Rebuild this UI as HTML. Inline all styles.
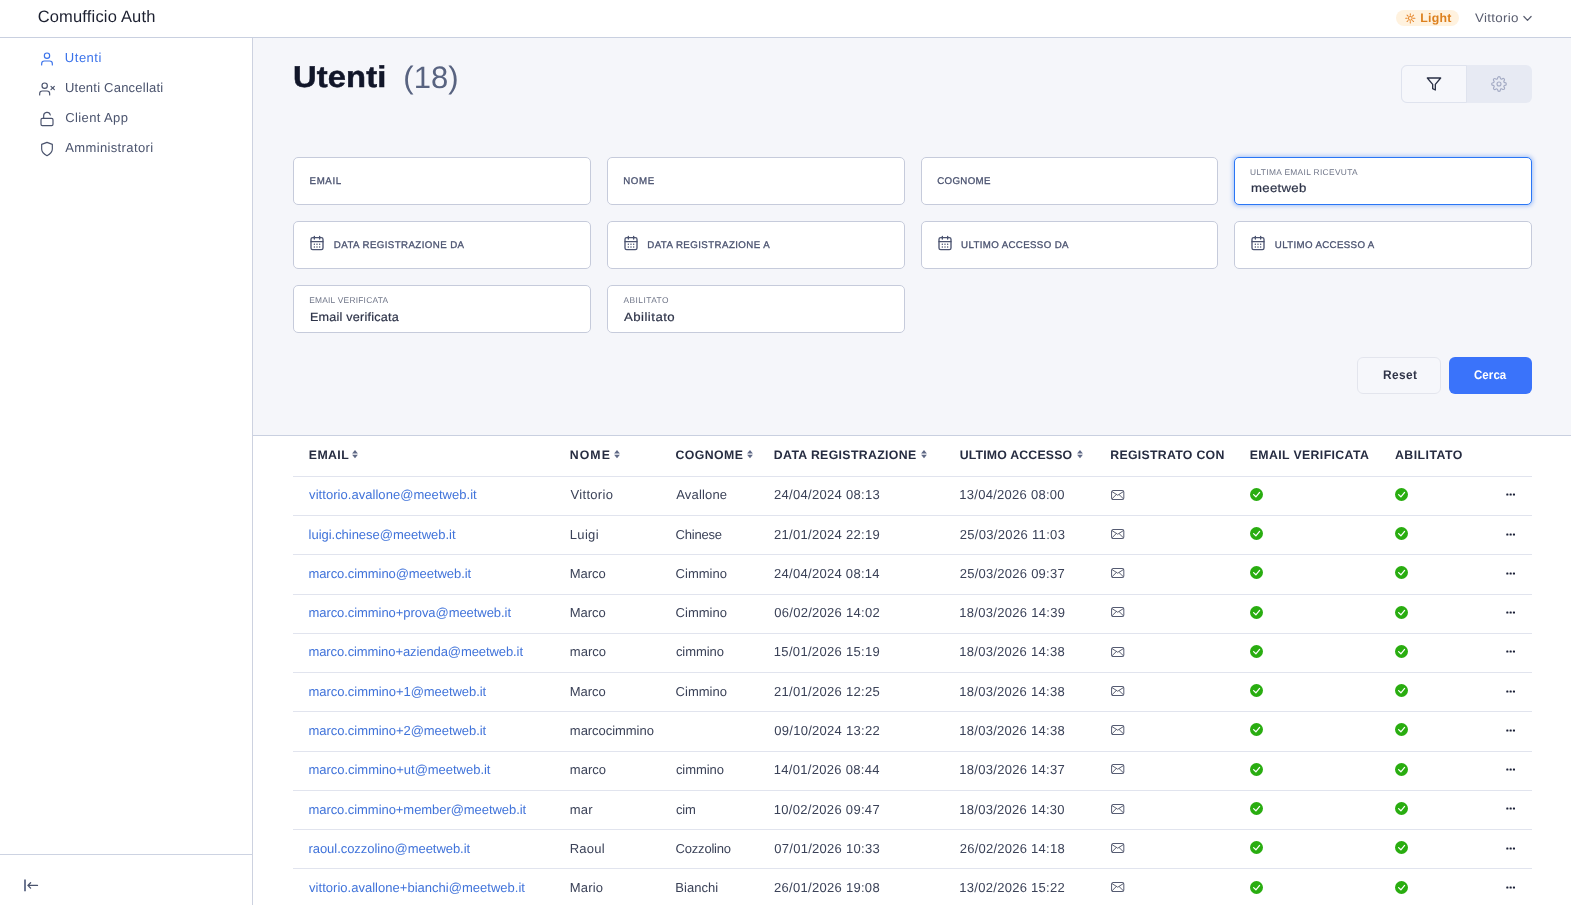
<!DOCTYPE html>
<html lang="it">
<head>
<meta charset="utf-8">
<title>Comufficio Auth</title>
<style>
*{box-sizing:border-box;margin:0;padding:0}
html,body{width:1571px;height:905px;overflow:hidden;background:#f5f6fa;font-family:"Liberation Sans",sans-serif}
#w{position:absolute;left:0;top:0;width:1571px;height:905px;will-change:transform}
.r,.t,.f{position:absolute;display:block}
.t{white-space:nowrap;text-rendering:geometricPrecision}
svg{overflow:visible}
.ic{fill:none;stroke:currentColor;stroke-width:2;stroke-linecap:round;stroke-linejoin:round}
.f{height:48px;background:#fff;border:1px solid #c6cbdb;border-radius:5px}
.foc{border-color:#2a76f5;box-shadow:0 0 4px 0.5px rgba(45,116,243,.4)}

.h{position:absolute;left:293px;width:1239px;height:1px;background:#e1e4ee}
</style>
</head>
<body>
<div id="w">
<div class="r" style="left:0;top:0;width:1571px;height:37px;background:#fff"></div>
<div class="r" style="left:0;top:37px;width:1571px;height:1px;background:#c9d0e0"></div>
<span id="brand" class="t" style="left:37.65px;top:6.2px;font-size:16.5px;line-height:23px;color:#1c2030;letter-spacing:0.177px;">Comufficio Auth</span>
<div class="r" style="left:1396px;top:10px;width:63px;height:16px;border-radius:8px;background:#fff2df"></div>
<svg class="r" style="left:1404.6px;top:12.6px;width:10.6px;height:10.6px;color:#e6862b" viewBox="0 0 24 24" fill="none" stroke="currentColor" stroke-width="2.3" stroke-linecap="round"><circle cx="12" cy="12" r="4.2"/><path d="M12 1.5v3.4M12 19.1v3.4M1.5 12h3.4M19.1 12h3.4M4.6 4.6l2.4 2.4M17 17l2.4 2.4M4.6 19.4L7 17M17 7l2.4-2.4"/></svg>
<span id="light" class="t" style="left:1420.36px;top:10.4px;font-size:12.3px;line-height:17px;font-weight:700;color:#dd801e;letter-spacing:0.222px;">Light</span>
<span id="user" class="t" style="left:1474.69px;top:8.9px;font-size:12.5px;line-height:18px;color:#585c6e;letter-spacing:0.265px;transform:scale(1.07,1);transform-origin:0 13.0px;">Vittorio</span>
<svg class="r" style="left:1523px;top:15.3px;width:9px;height:7px;color:#585c6e" viewBox="0 0 9 7" fill="none" stroke="currentColor" stroke-width="1.2" stroke-linecap="round" stroke-linejoin="round"><path d="M0.9 1.5L4.5 5.4 8.1 1.5"/></svg>
<div class="r" style="left:0;top:38px;width:252px;height:867px;background:#fff"></div>
<div class="r" style="left:252px;top:38px;width:1px;height:867px;background:#cdd2e0"></div>
<div class="r" style="left:0;top:854px;width:252px;height:1px;background:#cdd3e2"></div>
<svg class="r ic" style="left:39px;top:51px;width:16px;height:16px;color:#3a72ea;stroke-width:1.75" viewBox="0 0 24 24"><path d="M20 21v-2a4 4 0 0 0-4-4H8a4 4 0 0 0-4 4v2"/><circle cx="12" cy="7" r="4"/></svg>
<span id="nav0" class="t" style="left:64.87px;top:48.5px;font-size:13px;line-height:18px;color:#3a72ea;letter-spacing:0.509px;">Utenti</span>
<svg class="r ic" style="left:39px;top:81px;width:16px;height:16px;color:#4a536d;stroke-width:1.75" viewBox="0 0 24 24"><path d="M16 21v-2a4 4 0 0 0-4-4H5a4 4 0 0 0-4 4v2"/><circle cx="8.5" cy="7" r="4"/><line x1="18" y1="8" x2="23" y2="13"/><line x1="23" y1="8" x2="18" y2="13"/></svg>
<span id="nav1" class="t" style="left:64.96px;top:78.5px;font-size:13px;line-height:18px;color:#4a536d;letter-spacing:0.223px;">Utenti Cancellati</span>
<svg class="r ic" style="left:39px;top:111px;width:16px;height:16px;color:#4a536d;stroke-width:1.75" viewBox="0 0 24 24"><rect x="3" y="11" width="18" height="11" rx="2" ry="2"/><path d="M7 11V7a5 5 0 0 1 9.9-1"/></svg>
<span id="nav2" class="t" style="left:65.35px;top:108.5px;font-size:13px;line-height:18px;color:#4a536d;letter-spacing:0.364px;">Client App</span>
<svg class="r ic" style="left:39px;top:141px;width:16px;height:16px;color:#4a536d;stroke-width:1.75" viewBox="0 0 24 24"><path d="M12 22s8-4 8-10V5l-8-3-8 3v7c0 6 8 10 8 10z"/></svg>
<span id="nav3" class="t" style="left:65.21px;top:138.5px;font-size:13px;line-height:18px;color:#4a536d;letter-spacing:0.369px;">Amministratori</span>
<svg class="r" style="left:22px;top:877px;width:18px;height:18px;color:#4a536d" viewBox="0 0 18 18"><path d="M3 2.6v11.6" fill="none" stroke="#67718d" stroke-width="1.9"/><path d="M15.5 8.4H6M8.6 5.7L5.9 8.4l2.7 2.7" fill="none" stroke="currentColor" stroke-width="1.3" stroke-linecap="round" stroke-linejoin="round"/></svg>
<span id="title" class="t" style="left:292.79px;top:57.1px;font-size:30px;line-height:42px;font-weight:700;color:#111629;letter-spacing:0.126px;-webkit-text-stroke:0.5px #111629;transform:scale(1.09,1);transform-origin:0 30.5px;">Utenti</span>
<span id="count" class="t" style="left:403.26px;top:55.7px;font-size:31px;line-height:43px;color:#586380;letter-spacing:0.078px;">(18)</span>
<div class="r" style="left:1401px;top:65px;width:131px;height:38px;border-radius:6px;background:#e7eaf3"></div>
<div class="r" style="left:1401px;top:65px;width:66px;height:38px;border-radius:6px 0 0 6px;background:#f6f7fb;border:1px solid #dfe3ee"></div>
<svg class="r ic" style="left:1426px;top:75.6px;width:16px;height:16px;color:#2a3045" viewBox="0 0 24 24"><polygon points="22 3 2 3 10 12.46 10 19 14 21 14 12.46 22 3"/></svg>
<svg class="r ic" style="left:1491px;top:76px;width:16px;height:16px;color:#a4abc4;stroke-width:1.7" viewBox="0 0 24 24"><circle cx="12" cy="12" r="3"/><path d="M19.4 15a1.65 1.65 0 0 0 .33 1.82l.06.06a2 2 0 0 1 0 2.83 2 2 0 0 1-2.83 0l-.06-.06a1.65 1.65 0 0 0-1.82-.33 1.65 1.65 0 0 0-1 1.51V21a2 2 0 0 1-2 2 2 2 0 0 1-2-2v-.09A1.65 1.65 0 0 0 9 19.4a1.65 1.65 0 0 0-1.82.33l-.06.06a2 2 0 0 1-2.83 0 2 2 0 0 1 0-2.83l.06-.06a1.65 1.65 0 0 0 .33-1.82 1.65 1.65 0 0 0-1.51-1H3a2 2 0 0 1-2-2 2 2 0 0 1 2-2h.09A1.65 1.65 0 0 0 4.6 9a1.65 1.65 0 0 0-.33-1.82l-.06-.06a2 2 0 0 1 0-2.83 2 2 0 0 1 2.83 0l.06.06a1.65 1.65 0 0 0 1.82.33H9a1.65 1.65 0 0 0 1-1.51V3a2 2 0 0 1 2-2 2 2 0 0 1 2 2v.09a1.65 1.65 0 0 0 1 1.51 1.65 1.65 0 0 0 1.82-.33l.06-.06a2 2 0 0 1 2.83 0 2 2 0 0 1 0 2.83l-.06.06a1.65 1.65 0 0 0-.33 1.82V9a1.65 1.65 0 0 0 1.51 1H21a2 2 0 0 1 2 2 2 2 0 0 1-2 2h-.09a1.65 1.65 0 0 0-1.51 1z"/></svg>
<div class="f" style="left:293px;top:157px;width:298px"></div>
<span id="l_email" class="t" style="left:309.61px;top:175.3px;font-size:9.7px;line-height:14px;color:#4b5370;letter-spacing:0.600px;-webkit-text-stroke:0.3px #4b5370;">EMAIL</span>
<div class="f" style="left:607px;top:157px;width:298px"></div>
<span id="l_nome" class="t" style="left:623.15px;top:175.3px;font-size:9.7px;line-height:14px;color:#4b5370;letter-spacing:0.688px;-webkit-text-stroke:0.3px #4b5370;">NOME</span>
<div class="f" style="left:921px;top:157px;width:297px"></div>
<span id="l_cogn" class="t" style="left:937.28px;top:175.3px;font-size:9.7px;line-height:14px;color:#4b5370;letter-spacing:0.345px;-webkit-text-stroke:0.3px #4b5370;">COGNOME</span>
<div class="f foc" style="left:1234px;top:157px;width:298px"></div>
<span id="s_ult" class="t" style="left:1250.09px;top:165.9px;font-size:8.4px;line-height:12px;color:#6f7588;letter-spacing:0.335px;">ULTIMA EMAIL RICEVUTA</span>
<span id="v_meet" class="t" style="left:1250.62px;top:180.4px;font-size:12px;line-height:17px;color:#2e3449;letter-spacing:0.262px;-webkit-text-stroke:0.2px #2e3449;transform:scale(1.1,1);transform-origin:0 11.5px;">meetweb</span>
<div class="f" style="left:293px;top:221px;width:298px"></div>
<svg class="r ic" style="left:309px;top:235.3px;width:16px;height:16px;color:#4b5370" viewBox="0 0 24 24"><rect x="3" y="4" width="18" height="18" rx="2.5"/><path d="M16 2v4M8 2v4M3 10h18"/><path d="M8 14h.01M12 14h.01M16 14h.01M8 18h.01M12 18h.01M16 18h.01" stroke-width="2.2"/></svg>
<span id="l_d0" class="t" style="left:333.86px;top:238.6px;font-size:9.7px;line-height:14px;color:#4b5370;letter-spacing:0.418px;-webkit-text-stroke:0.3px #4b5370;">DATA REGISTRAZIONE DA</span>
<div class="f" style="left:607px;top:221px;width:298px"></div>
<svg class="r ic" style="left:623px;top:235.3px;width:16px;height:16px;color:#4b5370" viewBox="0 0 24 24"><rect x="3" y="4" width="18" height="18" rx="2.5"/><path d="M16 2v4M8 2v4M3 10h18"/><path d="M8 14h.01M12 14h.01M16 14h.01M8 18h.01M12 18h.01M16 18h.01" stroke-width="2.2"/></svg>
<span id="l_d1" class="t" style="left:647.21px;top:238.6px;font-size:9.7px;line-height:14px;color:#4b5370;letter-spacing:0.432px;-webkit-text-stroke:0.3px #4b5370;">DATA REGISTRAZIONE A</span>
<div class="f" style="left:921px;top:221px;width:297px"></div>
<svg class="r ic" style="left:937px;top:235.3px;width:16px;height:16px;color:#4b5370" viewBox="0 0 24 24"><rect x="3" y="4" width="18" height="18" rx="2.5"/><path d="M16 2v4M8 2v4M3 10h18"/><path d="M8 14h.01M12 14h.01M16 14h.01M8 18h.01M12 18h.01M16 18h.01" stroke-width="2.2"/></svg>
<span id="l_d2" class="t" style="left:961.03px;top:238.6px;font-size:9.7px;line-height:14px;color:#4b5370;letter-spacing:0.368px;-webkit-text-stroke:0.3px #4b5370;">ULTIMO ACCESSO DA</span>
<div class="f" style="left:1234px;top:221px;width:298px"></div>
<svg class="r ic" style="left:1250px;top:235.3px;width:16px;height:16px;color:#4b5370" viewBox="0 0 24 24"><rect x="3" y="4" width="18" height="18" rx="2.5"/><path d="M16 2v4M8 2v4M3 10h18"/><path d="M8 14h.01M12 14h.01M16 14h.01M8 18h.01M12 18h.01M16 18h.01" stroke-width="2.2"/></svg>
<span id="l_d3" class="t" style="left:1274.83px;top:238.6px;font-size:9.7px;line-height:14px;color:#4b5370;letter-spacing:0.363px;-webkit-text-stroke:0.3px #4b5370;">ULTIMO ACCESSO A</span>
<div class="f" style="left:293px;top:285px;width:298px"></div>
<span id="s_ev" class="t" style="left:309.17px;top:293.9px;font-size:8.4px;line-height:12px;color:#6f7588;letter-spacing:0.240px;">EMAIL VERIFICATA</span>
<span id="v_ev" class="t" style="left:309.91px;top:309.3px;font-size:12px;line-height:17px;color:#2e3449;letter-spacing:0.208px;-webkit-text-stroke:0.2px #2e3449;transform:scale(1.05,1);transform-origin:0 11.5px;">Email verificata</span>
<div class="f" style="left:607px;top:285px;width:298px"></div>
<span id="s_ab" class="t" style="left:623.41px;top:293.9px;font-size:8.4px;line-height:12px;color:#6f7588;letter-spacing:0.459px;">ABILITATO</span>
<span id="v_ab" class="t" style="left:623.93px;top:309.3px;font-size:12px;line-height:17px;color:#2e3449;letter-spacing:0.423px;-webkit-text-stroke:0.2px #2e3449;transform:scale(1.1,1);transform-origin:0 11.5px;">Abilitato</span>
<div class="r" style="left:1357px;top:357px;width:83.6px;height:37px;border-radius:6px;background:#f6f7fb;border:1px solid #e3e5ed"></div>
<div class="r" style="left:1449px;top:357px;width:83px;height:37px;border-radius:6px;background:#3a73fa"></div>
<span id="b_reset" class="t" style="left:1382.51px;top:366.1px;font-size:12.5px;line-height:18px;font-weight:700;color:#2e3347;letter-spacing:0.411px;transform:scale(0.95,1);transform-origin:0 13.0px;">Reset</span>
<span id="b_cerca" class="t" style="left:1474.06px;top:366.1px;font-size:12.5px;line-height:18px;font-weight:700;color:#ffffff;letter-spacing:0.074px;transform:scale(0.92,1);transform-origin:0 13.0px;">Cerca</span>
<div class="r" style="left:253px;top:435px;width:1318px;height:470px;background:#fff"></div>
<div class="r" style="left:253px;top:435px;width:1318px;height:1px;background:#c9d0e0"></div>
<span id="h0" class="t" style="left:308.87px;top:446.5px;font-size:12.3px;line-height:17px;font-weight:700;color:#262c41;letter-spacing:0.396px;">EMAIL</span>
<svg class="r" style="left:352.4px;top:450.3px;width:6px;height:8.2px" viewBox="0 0 6 8.2"><path d="M3 0L5.9 3.5H0.1zM3 8.2L5.9 4.7H0.1z" fill="#5f6986"/></svg>
<span id="h1" class="t" style="left:569.79px;top:446.5px;font-size:12.3px;line-height:17px;font-weight:700;color:#262c41;letter-spacing:1.054px;">NOME</span>
<svg class="r" style="left:613.9px;top:450.3px;width:6px;height:8.2px" viewBox="0 0 6 8.2"><path d="M3 0L5.9 3.5H0.1zM3 8.2L5.9 4.7H0.1z" fill="#5f6986"/></svg>
<span id="h2" class="t" style="left:675.56px;top:446.5px;font-size:12.3px;line-height:17px;font-weight:700;color:#262c41;letter-spacing:0.407px;">COGNOME</span>
<svg class="r" style="left:746.8px;top:450.3px;width:6px;height:8.2px" viewBox="0 0 6 8.2"><path d="M3 0L5.9 3.5H0.1zM3 8.2L5.9 4.7H0.1z" fill="#5f6986"/></svg>
<span id="h3" class="t" style="left:773.87px;top:446.5px;font-size:12.3px;line-height:17px;font-weight:700;color:#262c41;letter-spacing:0.348px;">DATA REGISTRAZIONE</span>
<svg class="r" style="left:920.6px;top:450.3px;width:6px;height:8.2px" viewBox="0 0 6 8.2"><path d="M3 0L5.9 3.5H0.1zM3 8.2L5.9 4.7H0.1z" fill="#5f6986"/></svg>
<span id="h4" class="t" style="left:959.65px;top:446.5px;font-size:12.3px;line-height:17px;font-weight:700;color:#262c41;letter-spacing:0.192px;">ULTIMO ACCESSO</span>
<svg class="r" style="left:1076.5px;top:450.3px;width:6px;height:8.2px" viewBox="0 0 6 8.2"><path d="M3 0L5.9 3.5H0.1zM3 8.2L5.9 4.7H0.1z" fill="#5f6986"/></svg>
<span id="h5" class="t" style="left:1110.30px;top:446.5px;font-size:12.3px;line-height:17px;font-weight:700;color:#262c41;letter-spacing:0.292px;">REGISTRATO CON</span>
<span id="h6" class="t" style="left:1249.73px;top:446.5px;font-size:12.3px;line-height:17px;font-weight:700;color:#262c41;letter-spacing:0.378px;">EMAIL VERIFICATA</span>
<span id="h7" class="t" style="left:1395.02px;top:446.5px;font-size:12.3px;line-height:17px;font-weight:700;color:#262c41;letter-spacing:0.471px;">ABILITATO</span>
<div class="h" style="top:476px"></div>
<span id="c0_0" class="t" style="left:309.08px;top:485.5px;font-size:13px;line-height:18px;color:#4073da;letter-spacing:0.047px;">vittorio.avallone@meetweb.it</span>
<span id="c0_1" class="t" style="left:570.54px;top:485.5px;font-size:13px;line-height:18px;color:#3b4258;letter-spacing:0.303px;">Vittorio</span>
<span id="c0_2" class="t" style="left:676.18px;top:485.5px;font-size:13px;line-height:18px;color:#3b4258;letter-spacing:0.181px;">Avallone</span>
<span id="c0_3" class="t" style="left:774.02px;top:485.5px;font-size:13px;line-height:18px;color:#3b4258;letter-spacing:0.303px;">24/04/2024 08:13</span>
<span id="c0_4" class="t" style="left:959.32px;top:485.5px;font-size:13px;line-height:18px;color:#3b4258;letter-spacing:0.271px;">13/04/2026 08:00</span>
<svg class="r" style="left:1110.7px;top:489.6px;width:13.4px;height:10.1px" viewBox="0 0 14 11" preserveAspectRatio="none" fill="none" stroke="#3d4358"><rect x="0.6" y="0.6" width="12.8" height="9.8" rx="1.7" stroke-width="1.05" stroke="#555b72"/><path d="M1 1.7L7 5.7 13 1.7M1.2 9.4L5.6 4.9M12.8 9.4L8.4 4.9" stroke-width="0.9"/></svg>
<svg class="r" style="left:1250.2px;top:487.9px;width:13px;height:13px" viewBox="0 0 13 13"><circle cx="6.5" cy="6.5" r="6.5" fill="#29ad10"/><path d="M3.6 6.6L5.9 8.8 9.6 4.4" fill="none" stroke="#fff" stroke-width="1.25" stroke-linecap="round" stroke-linejoin="round"/></svg>
<svg class="r" style="left:1395.2px;top:487.9px;width:13px;height:13px" viewBox="0 0 13 13"><circle cx="6.5" cy="6.5" r="6.5" fill="#29ad10"/><path d="M3.6 6.6L5.9 8.8 9.6 4.4" fill="none" stroke="#fff" stroke-width="1.25" stroke-linecap="round" stroke-linejoin="round"/></svg>
<svg class="r" style="left:1505.8px;top:493.3px;width:10px;height:3px" viewBox="0 0 10 3" fill="#1b2037"><rect x="0.3" y="0.4" width="2.1" height="2.2" rx="0.6"/><rect x="3.6" y="0.4" width="2.1" height="2.2" rx="0.6"/><rect x="6.9" y="0.4" width="2.1" height="2.2" rx="0.6"/></svg>
<div class="h" style="top:515px"></div>
<span id="c1_0" class="t" style="left:308.58px;top:525.5px;font-size:13px;line-height:18px;color:#4073da;letter-spacing:-0.029px;">luigi.chinese@meetweb.it</span>
<span id="c1_1" class="t" style="left:569.77px;top:525.5px;font-size:13px;line-height:18px;color:#3b4258;letter-spacing:0.336px;">Luigi</span>
<span id="c1_2" class="t" style="left:675.62px;top:525.5px;font-size:13px;line-height:18px;color:#3b4258;letter-spacing:-0.208px;">Chinese</span>
<span id="c1_3" class="t" style="left:774.02px;top:525.5px;font-size:13px;line-height:18px;color:#3b4258;letter-spacing:0.300px;">21/01/2024 22:19</span>
<span id="c1_4" class="t" style="left:959.70px;top:525.5px;font-size:13px;line-height:18px;color:#3b4258;letter-spacing:0.329px;">25/03/2026 11:03</span>
<svg class="r" style="left:1110.7px;top:528.9px;width:13.4px;height:10.1px" viewBox="0 0 14 11" preserveAspectRatio="none" fill="none" stroke="#3d4358"><rect x="0.6" y="0.6" width="12.8" height="9.8" rx="1.7" stroke-width="1.05" stroke="#555b72"/><path d="M1 1.7L7 5.7 13 1.7M1.2 9.4L5.6 4.9M12.8 9.4L8.4 4.9" stroke-width="0.9"/></svg>
<svg class="r" style="left:1250.2px;top:527.2px;width:13px;height:13px" viewBox="0 0 13 13"><circle cx="6.5" cy="6.5" r="6.5" fill="#29ad10"/><path d="M3.6 6.6L5.9 8.8 9.6 4.4" fill="none" stroke="#fff" stroke-width="1.25" stroke-linecap="round" stroke-linejoin="round"/></svg>
<svg class="r" style="left:1395.2px;top:527.2px;width:13px;height:13px" viewBox="0 0 13 13"><circle cx="6.5" cy="6.5" r="6.5" fill="#29ad10"/><path d="M3.6 6.6L5.9 8.8 9.6 4.4" fill="none" stroke="#fff" stroke-width="1.25" stroke-linecap="round" stroke-linejoin="round"/></svg>
<svg class="r" style="left:1505.8px;top:532.6px;width:10px;height:3px" viewBox="0 0 10 3" fill="#1b2037"><rect x="0.3" y="0.4" width="2.1" height="2.2" rx="0.6"/><rect x="3.6" y="0.4" width="2.1" height="2.2" rx="0.6"/><rect x="6.9" y="0.4" width="2.1" height="2.2" rx="0.6"/></svg>
<div class="h" style="top:554px"></div>
<span id="c2_0" class="t" style="left:308.44px;top:564.5px;font-size:13px;line-height:18px;color:#4073da;letter-spacing:-0.065px;">marco.cimmino@meetweb.it</span>
<span id="c2_1" class="t" style="left:569.77px;top:564.5px;font-size:13px;line-height:18px;color:#3b4258;letter-spacing:-0.012px;">Marco</span>
<span id="c2_2" class="t" style="left:675.62px;top:564.5px;font-size:13px;line-height:18px;color:#3b4258;letter-spacing:-0.002px;">Cimmino</span>
<span id="c2_3" class="t" style="left:774.02px;top:564.5px;font-size:13px;line-height:18px;color:#3b4258;letter-spacing:0.289px;">24/04/2024 08:14</span>
<span id="c2_4" class="t" style="left:959.70px;top:564.5px;font-size:13px;line-height:18px;color:#3b4258;letter-spacing:0.252px;">25/03/2026 09:37</span>
<svg class="r" style="left:1110.7px;top:568.1px;width:13.4px;height:10.1px" viewBox="0 0 14 11" preserveAspectRatio="none" fill="none" stroke="#3d4358"><rect x="0.6" y="0.6" width="12.8" height="9.8" rx="1.7" stroke-width="1.05" stroke="#555b72"/><path d="M1 1.7L7 5.7 13 1.7M1.2 9.4L5.6 4.9M12.8 9.4L8.4 4.9" stroke-width="0.9"/></svg>
<svg class="r" style="left:1250.2px;top:566.4px;width:13px;height:13px" viewBox="0 0 13 13"><circle cx="6.5" cy="6.5" r="6.5" fill="#29ad10"/><path d="M3.6 6.6L5.9 8.8 9.6 4.4" fill="none" stroke="#fff" stroke-width="1.25" stroke-linecap="round" stroke-linejoin="round"/></svg>
<svg class="r" style="left:1395.2px;top:566.4px;width:13px;height:13px" viewBox="0 0 13 13"><circle cx="6.5" cy="6.5" r="6.5" fill="#29ad10"/><path d="M3.6 6.6L5.9 8.8 9.6 4.4" fill="none" stroke="#fff" stroke-width="1.25" stroke-linecap="round" stroke-linejoin="round"/></svg>
<svg class="r" style="left:1505.8px;top:571.8px;width:10px;height:3px" viewBox="0 0 10 3" fill="#1b2037"><rect x="0.3" y="0.4" width="2.1" height="2.2" rx="0.6"/><rect x="3.6" y="0.4" width="2.1" height="2.2" rx="0.6"/><rect x="6.9" y="0.4" width="2.1" height="2.2" rx="0.6"/></svg>
<div class="h" style="top:594px"></div>
<span id="c3_0" class="t" style="left:308.44px;top:603.5px;font-size:13px;line-height:18px;color:#4073da;letter-spacing:-0.060px;">marco.cimmino+prova@meetweb.it</span>
<span id="c3_1" class="t" style="left:569.77px;top:603.5px;font-size:13px;line-height:18px;color:#3b4258;letter-spacing:-0.012px;">Marco</span>
<span id="c3_2" class="t" style="left:675.62px;top:603.5px;font-size:13px;line-height:18px;color:#3b4258;letter-spacing:-0.002px;">Cimmino</span>
<span id="c3_3" class="t" style="left:774.22px;top:603.5px;font-size:13px;line-height:18px;color:#3b4258;letter-spacing:0.282px;">06/02/2026 14:02</span>
<span id="c3_4" class="t" style="left:959.32px;top:603.5px;font-size:13px;line-height:18px;color:#3b4258;letter-spacing:0.292px;">18/03/2026 14:39</span>
<svg class="r" style="left:1110.7px;top:607.4px;width:13.4px;height:10.1px" viewBox="0 0 14 11" preserveAspectRatio="none" fill="none" stroke="#3d4358"><rect x="0.6" y="0.6" width="12.8" height="9.8" rx="1.7" stroke-width="1.05" stroke="#555b72"/><path d="M1 1.7L7 5.7 13 1.7M1.2 9.4L5.6 4.9M12.8 9.4L8.4 4.9" stroke-width="0.9"/></svg>
<svg class="r" style="left:1250.2px;top:605.7px;width:13px;height:13px" viewBox="0 0 13 13"><circle cx="6.5" cy="6.5" r="6.5" fill="#29ad10"/><path d="M3.6 6.6L5.9 8.8 9.6 4.4" fill="none" stroke="#fff" stroke-width="1.25" stroke-linecap="round" stroke-linejoin="round"/></svg>
<svg class="r" style="left:1395.2px;top:605.7px;width:13px;height:13px" viewBox="0 0 13 13"><circle cx="6.5" cy="6.5" r="6.5" fill="#29ad10"/><path d="M3.6 6.6L5.9 8.8 9.6 4.4" fill="none" stroke="#fff" stroke-width="1.25" stroke-linecap="round" stroke-linejoin="round"/></svg>
<svg class="r" style="left:1505.8px;top:611.1px;width:10px;height:3px" viewBox="0 0 10 3" fill="#1b2037"><rect x="0.3" y="0.4" width="2.1" height="2.2" rx="0.6"/><rect x="3.6" y="0.4" width="2.1" height="2.2" rx="0.6"/><rect x="6.9" y="0.4" width="2.1" height="2.2" rx="0.6"/></svg>
<div class="h" style="top:633px"></div>
<span id="c4_0" class="t" style="left:308.44px;top:642.5px;font-size:13px;line-height:18px;color:#4073da;letter-spacing:-0.089px;">marco.cimmino+azienda@meetweb.it</span>
<span id="c4_1" class="t" style="left:569.86px;top:642.5px;font-size:13px;line-height:18px;color:#3b4258;letter-spacing:-0.020px;">marco</span>
<span id="c4_2" class="t" style="left:675.89px;top:642.5px;font-size:13px;line-height:18px;color:#3b4258;letter-spacing:-0.064px;">cimmino</span>
<span id="c4_3" class="t" style="left:773.81px;top:642.5px;font-size:13px;line-height:18px;color:#3b4258;letter-spacing:0.322px;">15/01/2026 15:19</span>
<span id="c4_4" class="t" style="left:959.32px;top:642.5px;font-size:13px;line-height:18px;color:#3b4258;letter-spacing:0.273px;">18/03/2026 14:38</span>
<svg class="r" style="left:1110.7px;top:646.6px;width:13.4px;height:10.1px" viewBox="0 0 14 11" preserveAspectRatio="none" fill="none" stroke="#3d4358"><rect x="0.6" y="0.6" width="12.8" height="9.8" rx="1.7" stroke-width="1.05" stroke="#555b72"/><path d="M1 1.7L7 5.7 13 1.7M1.2 9.4L5.6 4.9M12.8 9.4L8.4 4.9" stroke-width="0.9"/></svg>
<svg class="r" style="left:1250.2px;top:644.9px;width:13px;height:13px" viewBox="0 0 13 13"><circle cx="6.5" cy="6.5" r="6.5" fill="#29ad10"/><path d="M3.6 6.6L5.9 8.8 9.6 4.4" fill="none" stroke="#fff" stroke-width="1.25" stroke-linecap="round" stroke-linejoin="round"/></svg>
<svg class="r" style="left:1395.2px;top:644.9px;width:13px;height:13px" viewBox="0 0 13 13"><circle cx="6.5" cy="6.5" r="6.5" fill="#29ad10"/><path d="M3.6 6.6L5.9 8.8 9.6 4.4" fill="none" stroke="#fff" stroke-width="1.25" stroke-linecap="round" stroke-linejoin="round"/></svg>
<svg class="r" style="left:1505.8px;top:650.3px;width:10px;height:3px" viewBox="0 0 10 3" fill="#1b2037"><rect x="0.3" y="0.4" width="2.1" height="2.2" rx="0.6"/><rect x="3.6" y="0.4" width="2.1" height="2.2" rx="0.6"/><rect x="6.9" y="0.4" width="2.1" height="2.2" rx="0.6"/></svg>
<div class="h" style="top:672px"></div>
<span id="c5_0" class="t" style="left:308.44px;top:682.5px;font-size:13px;line-height:18px;color:#4073da;letter-spacing:-0.049px;">marco.cimmino+1@meetweb.it</span>
<span id="c5_1" class="t" style="left:569.77px;top:682.5px;font-size:13px;line-height:18px;color:#3b4258;letter-spacing:-0.012px;">Marco</span>
<span id="c5_2" class="t" style="left:675.62px;top:682.5px;font-size:13px;line-height:18px;color:#3b4258;letter-spacing:-0.002px;">Cimmino</span>
<span id="c5_3" class="t" style="left:774.02px;top:682.5px;font-size:13px;line-height:18px;color:#3b4258;letter-spacing:0.304px;">21/01/2026 12:25</span>
<span id="c5_4" class="t" style="left:959.32px;top:682.5px;font-size:13px;line-height:18px;color:#3b4258;letter-spacing:0.273px;">18/03/2026 14:38</span>
<svg class="r" style="left:1110.7px;top:685.9px;width:13.4px;height:10.1px" viewBox="0 0 14 11" preserveAspectRatio="none" fill="none" stroke="#3d4358"><rect x="0.6" y="0.6" width="12.8" height="9.8" rx="1.7" stroke-width="1.05" stroke="#555b72"/><path d="M1 1.7L7 5.7 13 1.7M1.2 9.4L5.6 4.9M12.8 9.4L8.4 4.9" stroke-width="0.9"/></svg>
<svg class="r" style="left:1250.2px;top:684.2px;width:13px;height:13px" viewBox="0 0 13 13"><circle cx="6.5" cy="6.5" r="6.5" fill="#29ad10"/><path d="M3.6 6.6L5.9 8.8 9.6 4.4" fill="none" stroke="#fff" stroke-width="1.25" stroke-linecap="round" stroke-linejoin="round"/></svg>
<svg class="r" style="left:1395.2px;top:684.2px;width:13px;height:13px" viewBox="0 0 13 13"><circle cx="6.5" cy="6.5" r="6.5" fill="#29ad10"/><path d="M3.6 6.6L5.9 8.8 9.6 4.4" fill="none" stroke="#fff" stroke-width="1.25" stroke-linecap="round" stroke-linejoin="round"/></svg>
<svg class="r" style="left:1505.8px;top:689.6px;width:10px;height:3px" viewBox="0 0 10 3" fill="#1b2037"><rect x="0.3" y="0.4" width="2.1" height="2.2" rx="0.6"/><rect x="3.6" y="0.4" width="2.1" height="2.2" rx="0.6"/><rect x="6.9" y="0.4" width="2.1" height="2.2" rx="0.6"/></svg>
<div class="h" style="top:711px"></div>
<span id="c6_0" class="t" style="left:308.44px;top:721.5px;font-size:13px;line-height:18px;color:#4073da;letter-spacing:-0.049px;">marco.cimmino+2@meetweb.it</span>
<span id="c6_1" class="t" style="left:569.86px;top:721.5px;font-size:13px;line-height:18px;color:#3b4258;letter-spacing:-0.046px;">marcocimmino</span>
<span id="c6_3" class="t" style="left:774.22px;top:721.5px;font-size:13px;line-height:18px;color:#3b4258;letter-spacing:0.282px;">09/10/2024 13:22</span>
<span id="c6_4" class="t" style="left:959.32px;top:721.5px;font-size:13px;line-height:18px;color:#3b4258;letter-spacing:0.273px;">18/03/2026 14:38</span>
<svg class="r" style="left:1110.7px;top:725.1px;width:13.4px;height:10.1px" viewBox="0 0 14 11" preserveAspectRatio="none" fill="none" stroke="#3d4358"><rect x="0.6" y="0.6" width="12.8" height="9.8" rx="1.7" stroke-width="1.05" stroke="#555b72"/><path d="M1 1.7L7 5.7 13 1.7M1.2 9.4L5.6 4.9M12.8 9.4L8.4 4.9" stroke-width="0.9"/></svg>
<svg class="r" style="left:1250.2px;top:723.4px;width:13px;height:13px" viewBox="0 0 13 13"><circle cx="6.5" cy="6.5" r="6.5" fill="#29ad10"/><path d="M3.6 6.6L5.9 8.8 9.6 4.4" fill="none" stroke="#fff" stroke-width="1.25" stroke-linecap="round" stroke-linejoin="round"/></svg>
<svg class="r" style="left:1395.2px;top:723.4px;width:13px;height:13px" viewBox="0 0 13 13"><circle cx="6.5" cy="6.5" r="6.5" fill="#29ad10"/><path d="M3.6 6.6L5.9 8.8 9.6 4.4" fill="none" stroke="#fff" stroke-width="1.25" stroke-linecap="round" stroke-linejoin="round"/></svg>
<svg class="r" style="left:1505.8px;top:728.8px;width:10px;height:3px" viewBox="0 0 10 3" fill="#1b2037"><rect x="0.3" y="0.4" width="2.1" height="2.2" rx="0.6"/><rect x="3.6" y="0.4" width="2.1" height="2.2" rx="0.6"/><rect x="6.9" y="0.4" width="2.1" height="2.2" rx="0.6"/></svg>
<div class="h" style="top:751px"></div>
<span id="c7_0" class="t" style="left:308.44px;top:760.5px;font-size:13px;line-height:18px;color:#4073da;letter-spacing:-0.023px;">marco.cimmino+ut@meetweb.it</span>
<span id="c7_1" class="t" style="left:569.86px;top:760.5px;font-size:13px;line-height:18px;color:#3b4258;letter-spacing:-0.020px;">marco</span>
<span id="c7_2" class="t" style="left:675.89px;top:760.5px;font-size:13px;line-height:18px;color:#3b4258;letter-spacing:-0.064px;">cimmino</span>
<span id="c7_3" class="t" style="left:773.81px;top:760.5px;font-size:13px;line-height:18px;color:#3b4258;letter-spacing:0.302px;">14/01/2026 08:44</span>
<span id="c7_4" class="t" style="left:959.32px;top:760.5px;font-size:13px;line-height:18px;color:#3b4258;letter-spacing:0.279px;">18/03/2026 14:37</span>
<svg class="r" style="left:1110.7px;top:764.4px;width:13.4px;height:10.1px" viewBox="0 0 14 11" preserveAspectRatio="none" fill="none" stroke="#3d4358"><rect x="0.6" y="0.6" width="12.8" height="9.8" rx="1.7" stroke-width="1.05" stroke="#555b72"/><path d="M1 1.7L7 5.7 13 1.7M1.2 9.4L5.6 4.9M12.8 9.4L8.4 4.9" stroke-width="0.9"/></svg>
<svg class="r" style="left:1250.2px;top:762.7px;width:13px;height:13px" viewBox="0 0 13 13"><circle cx="6.5" cy="6.5" r="6.5" fill="#29ad10"/><path d="M3.6 6.6L5.9 8.8 9.6 4.4" fill="none" stroke="#fff" stroke-width="1.25" stroke-linecap="round" stroke-linejoin="round"/></svg>
<svg class="r" style="left:1395.2px;top:762.7px;width:13px;height:13px" viewBox="0 0 13 13"><circle cx="6.5" cy="6.5" r="6.5" fill="#29ad10"/><path d="M3.6 6.6L5.9 8.8 9.6 4.4" fill="none" stroke="#fff" stroke-width="1.25" stroke-linecap="round" stroke-linejoin="round"/></svg>
<svg class="r" style="left:1505.8px;top:768.1px;width:10px;height:3px" viewBox="0 0 10 3" fill="#1b2037"><rect x="0.3" y="0.4" width="2.1" height="2.2" rx="0.6"/><rect x="3.6" y="0.4" width="2.1" height="2.2" rx="0.6"/><rect x="6.9" y="0.4" width="2.1" height="2.2" rx="0.6"/></svg>
<div class="h" style="top:790px"></div>
<span id="c8_0" class="t" style="left:308.44px;top:800.5px;font-size:13px;line-height:18px;color:#4073da;letter-spacing:-0.057px;">marco.cimmino+member@meetweb.it</span>
<span id="c8_1" class="t" style="left:569.86px;top:800.5px;font-size:13px;line-height:18px;color:#3b4258;letter-spacing:0.106px;">mar</span>
<span id="c8_2" class="t" style="left:675.89px;top:800.5px;font-size:13px;line-height:18px;color:#3b4258;letter-spacing:-0.171px;">cim</span>
<span id="c8_3" class="t" style="left:773.81px;top:800.5px;font-size:13px;line-height:18px;color:#3b4258;letter-spacing:0.309px;">10/02/2026 09:47</span>
<span id="c8_4" class="t" style="left:959.32px;top:800.5px;font-size:13px;line-height:18px;color:#3b4258;letter-spacing:0.271px;">18/03/2026 14:30</span>
<svg class="r" style="left:1110.7px;top:803.6px;width:13.4px;height:10.1px" viewBox="0 0 14 11" preserveAspectRatio="none" fill="none" stroke="#3d4358"><rect x="0.6" y="0.6" width="12.8" height="9.8" rx="1.7" stroke-width="1.05" stroke="#555b72"/><path d="M1 1.7L7 5.7 13 1.7M1.2 9.4L5.6 4.9M12.8 9.4L8.4 4.9" stroke-width="0.9"/></svg>
<svg class="r" style="left:1250.2px;top:801.9px;width:13px;height:13px" viewBox="0 0 13 13"><circle cx="6.5" cy="6.5" r="6.5" fill="#29ad10"/><path d="M3.6 6.6L5.9 8.8 9.6 4.4" fill="none" stroke="#fff" stroke-width="1.25" stroke-linecap="round" stroke-linejoin="round"/></svg>
<svg class="r" style="left:1395.2px;top:801.9px;width:13px;height:13px" viewBox="0 0 13 13"><circle cx="6.5" cy="6.5" r="6.5" fill="#29ad10"/><path d="M3.6 6.6L5.9 8.8 9.6 4.4" fill="none" stroke="#fff" stroke-width="1.25" stroke-linecap="round" stroke-linejoin="round"/></svg>
<svg class="r" style="left:1505.8px;top:807.3px;width:10px;height:3px" viewBox="0 0 10 3" fill="#1b2037"><rect x="0.3" y="0.4" width="2.1" height="2.2" rx="0.6"/><rect x="3.6" y="0.4" width="2.1" height="2.2" rx="0.6"/><rect x="6.9" y="0.4" width="2.1" height="2.2" rx="0.6"/></svg>
<div class="h" style="top:829px"></div>
<span id="c9_0" class="t" style="left:308.44px;top:839.5px;font-size:13px;line-height:18px;color:#4073da;letter-spacing:-0.043px;">raoul.cozzolino@meetweb.it</span>
<span id="c9_1" class="t" style="left:569.77px;top:839.5px;font-size:13px;line-height:18px;color:#3b4258;letter-spacing:0.208px;">Raoul</span>
<span id="c9_2" class="t" style="left:675.62px;top:839.5px;font-size:13px;line-height:18px;color:#3b4258;letter-spacing:-0.212px;">Cozzolino</span>
<span id="c9_3" class="t" style="left:774.22px;top:839.5px;font-size:13px;line-height:18px;color:#3b4258;letter-spacing:0.281px;">07/01/2026 10:33</span>
<span id="c9_4" class="t" style="left:959.70px;top:839.5px;font-size:13px;line-height:18px;color:#3b4258;letter-spacing:0.249px;">26/02/2026 14:18</span>
<svg class="r" style="left:1110.7px;top:842.9px;width:13.4px;height:10.1px" viewBox="0 0 14 11" preserveAspectRatio="none" fill="none" stroke="#3d4358"><rect x="0.6" y="0.6" width="12.8" height="9.8" rx="1.7" stroke-width="1.05" stroke="#555b72"/><path d="M1 1.7L7 5.7 13 1.7M1.2 9.4L5.6 4.9M12.8 9.4L8.4 4.9" stroke-width="0.9"/></svg>
<svg class="r" style="left:1250.2px;top:841.2px;width:13px;height:13px" viewBox="0 0 13 13"><circle cx="6.5" cy="6.5" r="6.5" fill="#29ad10"/><path d="M3.6 6.6L5.9 8.8 9.6 4.4" fill="none" stroke="#fff" stroke-width="1.25" stroke-linecap="round" stroke-linejoin="round"/></svg>
<svg class="r" style="left:1395.2px;top:841.2px;width:13px;height:13px" viewBox="0 0 13 13"><circle cx="6.5" cy="6.5" r="6.5" fill="#29ad10"/><path d="M3.6 6.6L5.9 8.8 9.6 4.4" fill="none" stroke="#fff" stroke-width="1.25" stroke-linecap="round" stroke-linejoin="round"/></svg>
<svg class="r" style="left:1505.8px;top:846.6px;width:10px;height:3px" viewBox="0 0 10 3" fill="#1b2037"><rect x="0.3" y="0.4" width="2.1" height="2.2" rx="0.6"/><rect x="3.6" y="0.4" width="2.1" height="2.2" rx="0.6"/><rect x="6.9" y="0.4" width="2.1" height="2.2" rx="0.6"/></svg>
<div class="h" style="top:868px"></div>
<span id="c10_0" class="t" style="left:309.08px;top:878.5px;font-size:13px;line-height:18px;color:#4073da;letter-spacing:0.021px;">vittorio.avallone+bianchi@meetweb.it</span>
<span id="c10_1" class="t" style="left:569.77px;top:878.5px;font-size:13px;line-height:18px;color:#3b4258;letter-spacing:0.188px;">Mario</span>
<span id="c10_2" class="t" style="left:675.37px;top:878.5px;font-size:13px;line-height:18px;color:#3b4258;letter-spacing:0.003px;">Bianchi</span>
<span id="c10_3" class="t" style="left:774.02px;top:878.5px;font-size:13px;line-height:18px;color:#3b4258;letter-spacing:0.293px;">26/01/2026 19:08</span>
<span id="c10_4" class="t" style="left:959.32px;top:878.5px;font-size:13px;line-height:18px;color:#3b4258;letter-spacing:0.279px;">13/02/2026 15:22</span>
<svg class="r" style="left:1110.7px;top:882.2px;width:13.4px;height:10.1px" viewBox="0 0 14 11" preserveAspectRatio="none" fill="none" stroke="#3d4358"><rect x="0.6" y="0.6" width="12.8" height="9.8" rx="1.7" stroke-width="1.05" stroke="#555b72"/><path d="M1 1.7L7 5.7 13 1.7M1.2 9.4L5.6 4.9M12.8 9.4L8.4 4.9" stroke-width="0.9"/></svg>
<svg class="r" style="left:1250.2px;top:880.5px;width:13px;height:13px" viewBox="0 0 13 13"><circle cx="6.5" cy="6.5" r="6.5" fill="#29ad10"/><path d="M3.6 6.6L5.9 8.8 9.6 4.4" fill="none" stroke="#fff" stroke-width="1.25" stroke-linecap="round" stroke-linejoin="round"/></svg>
<svg class="r" style="left:1395.2px;top:880.5px;width:13px;height:13px" viewBox="0 0 13 13"><circle cx="6.5" cy="6.5" r="6.5" fill="#29ad10"/><path d="M3.6 6.6L5.9 8.8 9.6 4.4" fill="none" stroke="#fff" stroke-width="1.25" stroke-linecap="round" stroke-linejoin="round"/></svg>
<svg class="r" style="left:1505.8px;top:885.9px;width:10px;height:3px" viewBox="0 0 10 3" fill="#1b2037"><rect x="0.3" y="0.4" width="2.1" height="2.2" rx="0.6"/><rect x="3.6" y="0.4" width="2.1" height="2.2" rx="0.6"/><rect x="6.9" y="0.4" width="2.1" height="2.2" rx="0.6"/></svg>
</div>
</body>
</html>
